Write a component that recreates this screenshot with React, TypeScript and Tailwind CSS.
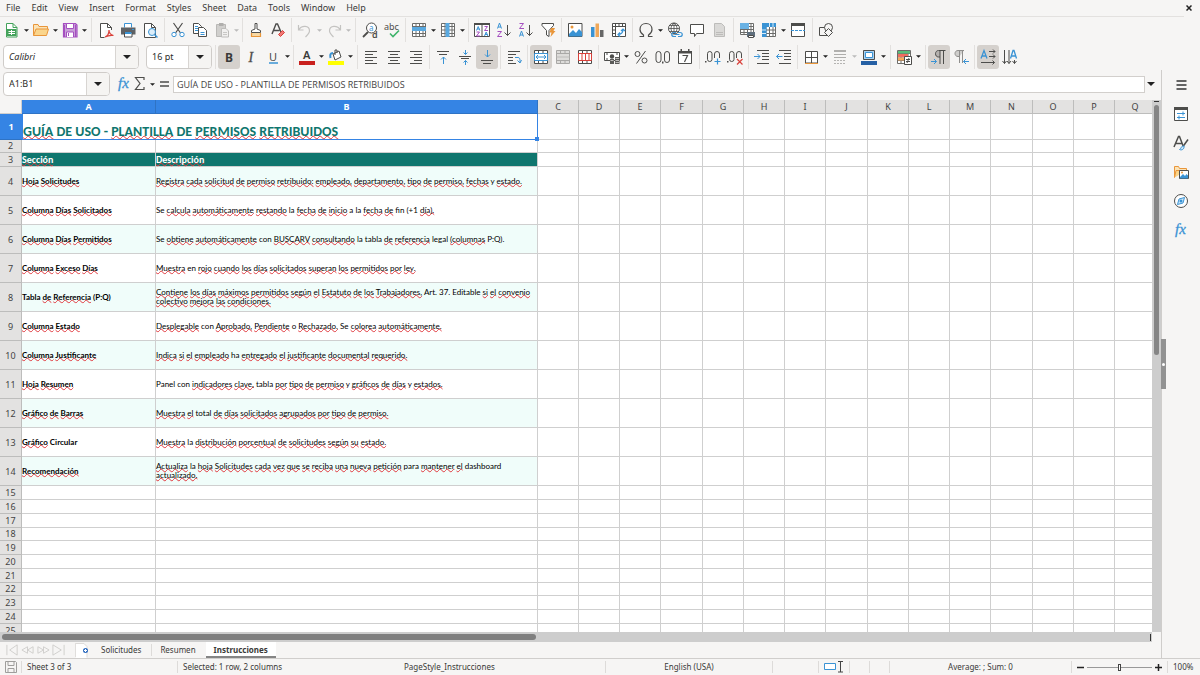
import React, { useState } from "react";

const D = "#4d4d4b";
const B = "#3a93d4";
const O = "#e9963a";
const R = "#d9403a";
const G = "#43a25a";
const P = "#a54fc0";

type Shape = React.ReactNode;

const s = (d: string, stroke = D, fill = "none", w = 1) => (
  <path d={d} stroke={stroke} fill={fill} strokeWidth={w} />
);
const f = (d: string, fill: string) => <path d={d} fill={fill} />;

const docShape = "M2.5 1.5h7l4 4v10h-11z";
const grid = "M1.5 1.5h13v13h-13zM1.5 4.5h13M1.5 8h13M1.5 11.5h13M5 1.5v13M8.5 1.5v13M12 1.5v13";

const icons: Record<string, Shape> = {
  new: <>{s("M2.5 1.5h6.500l4 4v9.500h-10.500z", G, "#fff")}{s("M9 1.500v4h4", G)}{f("M3 7h9.500v7h-9.500z", G)}{s("M4.500 9.500h6.500M4.500 11.500h6.500M7.500 8v5", "#fff")}</>,
  open: <>{s("M.5 13.500v-11h4.500l1 2h8.500v3", O, "#fbe3b6")}{s("M.5 13.500l2.500-6.500h12.500l-2 6.500z", O, "#fad58c")}</>,
  save: <>{s("M1.500 1.500h12l1.500 1.500v12h-13.500z", P, "#c9a0d8", 1.200)}{s("M4.500 1.500h7v5h-7zM4.500 15v-5h7v5", P, "#fff")}{s("M6.500 11v3M13.500 3v12M2.500 3v12", P)}</>,
  pdf: <>{s(docShape, D, "#fff")}{s("M9.500 1.500v4h4", D)}{f("M6.500 8h9v8h-9z", "#f6f5f4")}{s("M7 15c3-1 4-4 4-7 0 4 2 5 4.500 5.500-3-.5-5.500 0-8.500 1.500", R, "none", 1.200)}</>,
  print: <>{s("M4.500 5.500v-4h7v4", B, "#fff")}{f("M1 5.500h14.500v7h-14.500z", "#5f6265")}{s("M4.500 10.500h7.500v4.500h-7.500z", D, "#fff")}{f("M5 10h6.500v2h-6.500zM12 7h2v1h-2z", B)}</>,
  preview: <>{s(docShape, D, "#fff")}{s("M9.500 1.500v4h4")}<circle cx="10" cy="10" r="3.500" stroke={B} fill="#dceefa" />{s("M12.500 12.500l3 3", B, "none", 1.500)}</>,
  cut: <>{s("M3.500 1l7 10M12.500 1l-7 10", D, "none", 1.200)}<circle cx="4" cy="12.500" r="2.200" stroke={B} fill="#fff" /><circle cx="12" cy="12.500" r="2.200" stroke={B} fill="#fff" /></>,
  copy: <>{s("M1.500 1.500h5l3 3v7h-8z", D, "#fff")}{s("M3 4.500h3M3 6.500h3M3 8.500h3", B)}{s("M6.500 5.500h5l3 3v6h-8z", D, "#fff")}{s("M8.500 10.500h4M8.500 12.500h4", B)}</>,
  paste: <>{s("M2.500 2.500h9v12h-9z", "#b9b8b6", "#d0cfcd")}{f("M5 1h4.500v3h-4.500z", "#b0afad")}{s("M7.500 6.500h4.500l2.500 2.500v6h-7z", "#bdbcba", "#f1f0ef")}{s("M9 10.500h4M9 12.500h4", "#c8c7c5")}</>,
  clone: <>{s("M7 7v-5.500h2v5.500l3.500 1.500v2h-9v-2z", D, "#fff")}{s("M3.500 11v3.500h9v-3.500", O, "#f9d9a4", 1.200)}</>,
  clear: <>{s("M2 12l4-10h1.500l3.500 8M3.500 8.500h6", D, "none", 1.400)}{s("M8.500 12.500l4-4 2 2-4 4z", R, "#f07a78")}</>,
  undo: <>{s("M1.500 3v5h5M1.500 8c3-5 11-5 11 1 0 2-2 4-4 6", "#c4c3c1", "none", 1.200)}</>,
  redo: <>{s("M14.500 3v5h-5M14.500 8c-3-5-11-5-11 1 0 2 2 4 4 6", "#c4c3c1", "none", 1.200)}</>,
  find: <><circle cx="9.500" cy="6" r="5" stroke={D} fill="#fff" />{s("M6 10l-5 5", D, "none", 1.800)}<text x="7" y="9" fontSize="8" fill={B} fontFamily="Noto Sans">a</text><text x="10" y="16" fontSize="9" fontWeight="600" fill={D} fontFamily="Noto Sans">d</text></>,
  spell: <><text x="0" y="8" fontSize="9" fill={D} fontFamily="Noto Sans">abc</text>{s("M6 11.500l3 3 6-6", "#3eb36a", "none", 1.600)}</>,
  row: <>{s(grid, "#6c6c6a", "#fff")}{f("M1 5h14v4h-14z", "#5aa9e0")}</>,
  col: <>{s(grid, "#6c6c6a", "#fff")}{f("M5.500 1h4v14h-4z", "#5aa9e0")}</>,
  sort: <>{s("M.5 1.500h15v13h-15zM8 1.500v13", D, "#fff")}{f("M0 1h16v2h-16z", D)}{s("M2.500 8.500l1.700-4 1.700 4M3 7h2.500M10.500 14l1.700-4 1.700 4M11 12.500h2.500", B)}{s("M2.500 10h3l-3 4h3.500M10.500 4.500h3l-3 4h3.500", P)}</>,
  asc: <>{s("M1.500 6.500l2-5.500 2 5.500M2 5h3", B)}{s("M1.500 9.500h4l-4 5h4.500", P)}{s("M11.500 3v10.500M8.500 10.500l3 3 3-3", D)}</>,
  desc: <>{s("M1.500 1.500h4l-4 5h4.500", P)}{s("M1.500 14.500l2-5.500 2 5.500M2 13h3", B)}{s("M11.500 3v10.500M8.500 10.500l3 3 3-3", D)}</>,
  filter: <>{s("M2 1.500h11.500v2l-4.500 5v6l-2.500-1.500v-4.500l-4.500-5z", D, "#fff")}{f("M11 6h4l-1.500 3h2l-5 6 1-4.500h-2z", O)}</>,
  image: <>{s("M1.500 1.500h13.500v13h-13.500z", D, "#fff")}{f("M2 12l4-4 3 3 3-4 3 3v4.500h-13z", B)}<circle cx="5" cy="5" r="1.500" fill={O} /></>,
  chart: <>{f("M2 5h3.500v10h-3.500z", B)}{f("M6.500 1.500h3.500v13.500h-3.500z", "#f0a85a")}{f("M11 8h3.500v7h-3.500z", "#666")}</>,
  pivot: <>{s("M1.500 1.500h13v13h-13zM1.500 4.500h13M4.500 1.500v13M8 1.500v3M11.500 1.500v3M1.500 8h3M1.500 11.500h3", D, "#fff")}{s("M7 12.500c4 0 5-2 5-5.500M9 10.500l-2 2 2 2M10 9l2-2 2 2", B, "none", 1.200)}</>,
  omega: <>{s("M1.500 14.500h4v-1.500c-3-2-3.500-4-3.500-5.500 0-3.500 2.500-6 6-6s6 2.500 6 6c0 1.500-.5 3.500-3.500 5.500v1.500h4", D, "none", 1.200)}</>,
  link: <><circle cx="7" cy="6.500" r="5.500" stroke={D} fill="#fff" />{s("M1.500 6.500h11M7 1v11M2.500 3.500h9M2.500 9.500h9M7 1c-4 3-4 8 0 11M7 1c4 3 4 8 0 11", D, "none", 0.800)}{s("M9 10.500h-2c-3 0-3 4 0 4h2M11 10.500h2c3 0 3 4 0 4h-2M7.500 12.500h5", B, "none", 1.200)}</>,
  comment: <>{s("M1.500 2.500h13v9h-7l-2 3v-3h-4z", D, "#fff")}</>,
  header: <>{s("M3.500 1.500h7l3 3v10h-10z", "#bdbcba", "#dad9d7")}{s("M5 10.500h7M5 12.500h7", "#bdbcba")}</>,
  parea: <>{s("M1.500 1.500h13v11h-13zM1.500 4.500h13M1.500 7.500h13M1.500 10.500h13M5 1.500v11M8.500 1.500v11M12 1.500v11", "#6c6c6a", "#fff")}{f("M1 1h9v6h-9z", "#6ab2e4")}{f("M8 10h8v5h-8z", "#5f6f7d")}{s("M9.500 13.500h5v2h-5z", D, "#fff")}</>,
  freeze: <>{s(grid, "#6c6c6a", "#fff")}{f("M1 1h4.500v14h-4.500zM1 1h14v4h-14z", "#3a93d4")}{s("M1 8h4M1 11.500h4M8.500 1v4M12 1v4", "#d6ecfa")}</>,
  split: <>{s("M1.500 1.500h13v13h-13z", D, "#fff")}{f("M1 1h14v3h-14z", D)}<path d="M1 8.500h14" stroke={B} strokeDasharray="3 1" /></>,
  shapes: <>{s("M1.500 5.500h8v8h-8z")}<circle cx="10.500" cy="5.500" r="4" stroke={D} fill="#f6f5f4" />{s("M6.500 10.500l4-4 4 4-4 4z", D, "#f6f5f4")}</>,
  left: s("M1 2.500h12M1 5.500h8M1 8.500h12M1 11.500h8M1 14.500h12"),
  center: s("M2 2.500h12M4 5.500h8M2 8.500h12M4 11.500h8M2 14.500h12"),
  right: s("M2 2.500h12M6 5.500h8M2 8.500h12M6 11.500h8M2 14.500h12"),
  top: <>{s("M2 2.500h12M4 5.500h8")}{s("M8.500 15v-7M6 10.500l2.500-2.500 2.500 2.500", B)}</>,
  middle: <>{s("M2 7.500h12M4 9.500h8")}{s("M8.500 1v4.500M6.500 3.500l2 2 2-2M8.500 16v-4.500M6.500 13.500l2-2 2 2", B)}</>,
  bottom: <>{s("M2 11.500h12M4 14.500h8")}{s("M8.500 1v7M6 5.500l2.500 2.500 2.500-2.500", B)}</>,
  wrap: <>{s("M2 2.500h12M2 5.500h8M2 8.500h5M2 11.500h5M2 14.500h8")}{s("M9 8.500h3c1.500 0 2 1 2 3v2M11.500 11.500l2.500 2.500 1.500-3", B)}</>,
  merge: <>{s("M1.500 1.500h13v13h-13zM1.500 4.500h13M1.500 11.500h13M5.500 1.500v3M10 1.500v3M5.500 11.500v3M10 11.500v3", D, "#fff")}{s("M1.500 4.500h13v7h-13zM3 8h10M5 6l-2 2 2 2M11 6l2 2-2 2", B)}</>,
  mergeCells: <>{s("M1.500 1.500h13v13h-13zM1.500 4.500h13M1.500 11.500h13M5.500 1.500v3M10 1.500v3M5.500 11.500v3M10 11.500v3", "#a9a8a6", "#dddcda")}{s("M1.500 8h13", "#bdbcba")}</>,
  unmerge: <>{s("M1.500 1.500h13v13h-13zM1.500 4.500h13M1.500 11.500h13M5.500 1.500v3M10 1.500v3M5.500 11.500v3M10 11.500v3", D, "#fff")}{s("M1.500 4.500h13v7h-13zM5 4.500v7M8.500 4.500v7M12 4.500v7", R)}</>,
  currency: <>{s("M.5 3.500h15v8h-15z", D, "#fff")}<circle cx="8" cy="7.500" r="2.200" fill={D} />{s("M2 5h2M12 5h2M2 10h2", D)}{f("M6 10h4v5h-4zM11 8h4.500v7h-4.500z", "#5a5a58")}{s("M6.500 11.500h3M11.500 9.500h3.500M11.500 11.500h3.500M11.500 13.500h3.500", "#e8e7e5", "none", 0.700)}</>,
  percent: <><circle cx="4.500" cy="5" r="2.500" stroke={D} /><circle cx="11.500" cy="11.500" r="2.500" stroke={D} />{s("M12.500 2l-9 12.500")}</>,
  number: <><rect x="1" y="2.500" width="5" height="11" rx="2.500" stroke={D} /><rect x="9.500" y="2.500" width="5" height="11" rx="2.500" stroke={D} />{f("M7 12.500h1.500v2h-1.500z", D)}</>,
  date: <>{s("M1.500 2.500h13v12h-13z", D, "#fff")}{f("M1 2h14v2.500h-14zM3.500 0h1.500v3h-1.500zM11 0h1.500v3h-1.500z", D)}{s("M5.500 6.500h5l-3 6.500", D, "none", 1.200)}</>,
  addDec: <><rect x="2.500" y="2.500" width="4.500" height="10" rx="2.200" stroke={D} /><rect x="9.500" y="2.500" width="5" height="10" rx="2.500" stroke={D} />{f("M0 12h1.500v1.500h-1.500z", D)}{f("M9 9h7v7h-7z", "#f6f5f4")}{s("M12.500 9.500v6M9.500 12.500h6", B, "none", 1.200)}</>,
  delDec: <><rect x="2.500" y="2.500" width="4.500" height="10" rx="2.200" stroke={D} /><rect x="9.500" y="2.500" width="5" height="10" rx="2.500" stroke={D} />{f("M0 12h1.500v1.500h-1.500z", D)}{f("M9 9h7v7h-7z", "#f6f5f4")}{s("M10 10l5.500 5.500M15.500 10l-5.500 5.500", R, "none", 1.200)}</>,
  indent: <>{s("M3 1.500h12M8 4.500h7M8 7.500h7M8 10.500h7M3 14.500h12")}{s("M0 7.500h6M3.500 5l2.500 2.500-2.500 2.500", B)}</>,
  outdent: <>{s("M3 1.500h12M8 4.500h7M8 7.500h7M8 10.500h7M3 14.500h12")}{s("M6.500 7.500h-6M3 5l-2.500 2.500 2.500 2.500", B)}</>,
  border: <>{s("M2.500 2.500h12v11.500h-12z", D, "#fff")}{s("M8.500 2.500v11.500M2.500 8.500h12")}{s("M2 14.500h13", O)}</>,
  bstyle: <>{s("M2 2h12", "#9a9997", "none", 1.500)}{s("M2 5.500h12M2 8.500h12", "#aeadab", "none", 1)}<path d="M2 11.500h12M2 14.500h12" stroke="#b5b4b2" strokeDasharray="2 1" /></>,
  bcolor: <>{s("M2.500 1.500h11v9h-11z", D, "#a9d2f3", 1)}{s("M4.500 3.500h7v5h-7z", B, "#fff")}{f("M0 12h16v4h-16z", "#2660a4")}</>,
  cond: <>{s(grid, "#6c6c6a", "#fff")}{f("M2 2h12v2.500h-12z", "#5bbf7a")}{f("M2 5h10v3h-10z", "#ef6d60")}{f("M2 8.500h6v3h-6z", "#f5a95c")}{s("M8.500 7.500h7v8h-7z", D, "#fff")}{s("M10 10.500h4M10 12.500h4M13 9l-2 5")}</>,
  ltr: <>{f("M9 2h-2c-3.500 0-3.500 6 0 6h2z", "#b5b2af")}{s("M9 15v-13.500M12.500 15v-13.500M14.500 1.500h-7c-4 0-4 6.500 0 6.500h1.500", D, "none", 1)}{s("M0 12.500h5.500M3 10l2.500 2.500-2.500 2.500", B)}</>,
  rtl: <>{s("M6.500 14v-12.500M9.500 14v-12.500M11 1.500h-6c-4 0-4 6 0 6h1.500", "#8f8e8c", "#cfcecc")}{s("M16 12.500h-5.500M13 10l-2.500 2.500 2.500 2.500", B)}</>,
  textLtr: <>{s("M1 9.500l3-8 3 8M2 7h4", B, "none", 1.300)}{s("M9 2.500h6M9 7.500h6M1 13.500h13.500M13 .5l2 2-2 2M13 5.500l2 2-2 2M12.500 11.500l2 2-2 2", D)}</>,
  textTtb: <>{s("M8.500 9.500l2.500-8h1l2.500 8M9.500 7h4", B, "none", 1.300)}{s("M2.500 1v13.500M7 1v13.500M12.500 11v3.500M.5 12l2 2.500 2-2.500M5 12l2 2.500 2-2.500M10.500 12l2 2.500 2-2.500", D)}</>,
  bold: <text x="4" y="12.500" fontSize="12" fontWeight="700" fill="#3a3a38" fontFamily="Noto Sans">B</text>,
  italic: <text x="5.500" y="13" fontSize="14" fontStyle="italic" fill={D} stroke={D} strokeWidth="0.300" fontFamily="Liberation Serif">I</text>,
  underline: <><text x="4" y="11.500" fontSize="11" fill={D} fontFamily="Noto Sans">U</text>{s("M4 14h9", B, "none", 1.500)}</>,
  fontColor: <><text x="4" y="10" fontSize="11" fontWeight="600" fill="#3a3a38" fontFamily="Noto Sans">A</text>{f("M0 12h16v4h-16z", "#c9211e")}</>,
  highlight: <>{s("M5 5l6-3 2 6-6 3z", D, "#fff")}{s("M7 6v-5h2v3", D)}{s("M5 4c-3 0-3 2-2.500 5", B, "none", 2)}{f("M0 12h16v4h-16z", "#ffff00")}</>,
  fx: <text x="2" y="12" fontSize="15" fontStyle="italic" fill={B} stroke={B} strokeWidth="0.300" fontFamily="Liberation Serif">fx</text>,
  sigma: s("M12 4v-2.500h-8.500l4.500 6-4.500 6h8.500v-2.500", D, "none", 1.200),
  equal: <path d="M4 6h9M4 10h9" stroke={D} strokeWidth="1.500" />,
  menu: <path d="M3.500 4h10M3.500 8h10M3.500 12h10" stroke="#333" strokeWidth="1.500" />,
  props: <>{s("M1.500 2.500h13v12h-13z", D, "#fff")}{f("M1 1h14v3h-14z", D)}{s("M4 7.500h8M10 5.500v4M4 11.500h8M6 9.500v4", B)}</>,
  styles: <>{s("M1 12l4.500-10.500h1l4 10.500M3 8.500h6.500", D, "none", 1.500)}{s("M15 4.500l-5 7", D, "none", 1.500)}{s("M6.500 14.500c2 1 5 0 4.500-3.500-3-.5-2.500 2.500-4.500 3.500z", B, "#cde6f8")}</>,
  gallery: <>{s("M1.500 13.500v-11h4l1 2h7v2", O, "#fbe3b6")}{s("M1.500 13.500l1.500-7h10", O, "#fad58c")}{s("M6.500 6.500h9v8h-9z", D, "#fff")}{f("M7 13l3-3 2 2 1.500-2 1.500 1.500v3h-8z", B)}<circle cx="9" cy="8.500" r="1" fill={O} /></>,
  navigator: <><circle cx="8" cy="8" r="6.500" stroke={D} fill="#fff" />{s("M11.500 4.500l-1.500 5.500-5.500 1.500 1.500-5.500z", B, "#cde6f8")}<circle cx="8" cy="8" r="1.500" fill={B} /></>,
  disk: <>{s("M2.500 2.500h10l1 1v10h-11z", "#9f9e9c")}{s("M5 2.500v4h6v-4M5 13.500v-4h6v4", "#9f9e9c")}</>,
  addSheet: <>{f("M0 2h8l3 3v11h-11z", "#fff")}{s("M0 1.500h8l3 3v11", "#dddbd9")}<circle cx="9.500" cy="8.500" r="2.500" fill="#2e6cc0" />{s("M9.500 7v3M8 8.500h3", "#fff")}</>,
};

function Icon({ name }: { name: string }) {
  return (
    <svg viewBox="0 0 16 16" fill="none" aria-hidden="true" className="block h-4 w-4 shrink-0 overflow-visible">
      {icons[name]}
    </svg>
  );
}

function Caret({ big = false, dim = false }: { big?: boolean; dim?: boolean }) {
  return (
    <svg viewBox="0 0 8 4" aria-hidden="true" className={big ? "block h-1 w-2" : "block h-[3px] w-[5px]"}>
      <path d="M0 0h8l-4 4z" fill={dim ? "#bbb" : "#222"} />
    </svg>
  );
}

function Tool({ name, label, on = false }: { name: string; label: string; on?: boolean }) {
  return (
    <button
      type="button"
      aria-label={label}
      aria-pressed={on || undefined}
      className={"flex h-6 w-[22px] shrink-0 items-center justify-center rounded-[3px] " + (on ? "bg-[#d5d1cd]" : "hover:bg-[#e6e4e2]")}
    >
      <Icon name={name} />
    </button>
  );
}

function Split({ name, label, dim = false }: { name: string; label: string; dim?: boolean }) {
  return (
    <div className="flex shrink-0">
      <Tool name={name} label={label} />
      <button type="button" aria-label={label + " options"} className="flex h-6 w-[7px] items-center justify-center">
        <Caret dim={dim} />
      </button>
    </div>
  );
}

function Sep({ size = "s" }: { size?: "s" | "m" | "l" }) {
  const w = size === "s" ? "w-[5px]" : size === "m" ? "w-[6px]" : "w-[7px]";
  return (
    <div className={"flex h-6 shrink-0 justify-center " + w}>
      <div className="w-px bg-[#e2e0de]" />
    </div>
  );
}

function Combo({ label, value, width, italic = false }: { label: string; value: string; width: string; italic?: boolean }) {
  const [v, setV] = useState(value);
  return (
    <div className={"flex h-6 shrink-0 overflow-hidden rounded-[4px] border border-[#cfccc9] bg-white " + width}>
      <input
        aria-label={label}
        value={v}
        onChange={(e) => setV(e.target.value)}
        className={"min-w-0 flex-1 px-[5px] text-[9px] text-[#2c2c2a] outline-none " + (italic ? "italic" : "")}
      />
      <button type="button" aria-label={label + " list"} className="flex w-[23px] items-center justify-center border-l border-[#d8d5d2] bg-[#f5f4f2]">
        <Caret big />
      </button>
    </div>
  );
}

const menus = ["File", "Edit", "View", "Insert", "Format", "Styles", "Sheet", "Data", "Tools", "Window", "Help"];

const known = new Set([
  "DE", "USO", "-", "Se", "la", "con", "en", "Tabla", "tabla", "(P:Q)", "P:Q).", "Art.", "37.", "Editable",
  "Panel", "o", "y", "ha", "total", "legal", "a", "dashboard", "para", "(+1", "fin", "Circular",
]);

function Spelled({ text }: { text: string }) {
  return (
    <>
      {text.split(" ").map((word, i) => (
        <React.Fragment key={i}>
          {i > 0 && " "}
          {known.has(word) ? (
            word
          ) : (
            <span className="underline decoration-[#e0393e] decoration-wavy decoration-1 [text-decoration-skip-ink:none] [text-underline-offset:-1px]">{word}</span>
          )}
        </React.Fragment>
      ))}
    </>
  );
}

const guide: [string, string][] = [
  ["Hoja Solicitudes", "Registra cada solicitud de permiso retribuido: empleado, departamento, tipo de permiso, fechas y estado."],
  ["Columna Días Solicitados", "Se calcula automáticamente restando la fecha de inicio a la fecha de fin (+1 día)."],
  ["Columna Días Permitidos", "Se obtiene automáticamente con BUSCARV consultando la tabla de referencia legal (columnas P:Q)."],
  ["Columna Exceso Días", "Muestra en rojo cuando los días solicitados superan los permitidos por ley."],
  ["Tabla de Referencia (P:Q)", "Contiene los días máximos permitidos según el Estatuto de los Trabajadores, Art. 37. Editable si el convenio colectivo mejora las condiciones."],
  ["Columna Estado", "Desplegable con Aprobado, Pendiente o Rechazado. Se colorea automáticamente."],
  ["Columna Justificante", "Indica si el empleado ha entregado el justificante documental requerido."],
  ["Hoja Resumen", "Panel con indicadores clave, tabla por tipo de permiso y gráficos de días y estados."],
  ["Gráfico de Barras", "Muestra el total de días solicitados agrupados por tipo de permiso."],
  ["Gráfico Circular", "Muestra la distribución porcentual de solicitudes según su estado."],
  ["Recomendación", "Actualiza la hoja Solicitudes cada vez que se reciba una nueva petición para mantener el dashboard actualizado."],
];

const cols = ["C", "D", "E", "F", "G", "H", "I", "J", "K", "L", "M", "N", "O", "P", "Q"];
const emptyRows = [15, 16, 17, 18, 19, 20, 21, 22, 23, 24, 25];

const cell = "border-r border-b border-[#cfcfcf] p-0";
const head = "border-r border-b border-[#bdbdbc] bg-[#e3e2e1] p-0 text-center text-[9px] font-normal leading-[12px] text-[#444]";

function Blank() {
  return <>{cols.map((c) => <td key={c} className={cell} />)}</>;
}

function Sheet() {
  return (
    <table className="w-[1156px] table-fixed border-separate border-spacing-0 bg-white">
      <colgroup>
        <col className="w-[22px]" />
        <col className="w-[134px]" />
        <col className="w-[382px]" />
        {cols.map((c, i) => <col key={c} className={i % 4 === 3 ? "w-[42px]" : "w-[41px]"} />)}
      </colgroup>
      <thead>
        <tr className="h-[14px]">
          <td className="border-r border-b border-[#d0cfce] bg-[#f6f5f4] p-0" />
          <th scope="col" className="border-r border-b border-[#2f73c4] bg-[#3584e4] p-0 text-[9px] leading-[12px] text-white">A</th>
          <th scope="col" className="border-r border-b border-[#2f73c4] bg-[#3584e4] p-0 text-[9px] leading-[12px] text-white">B</th>
          {cols.map((c) => <th key={c} scope="col" className={head}>{c}</th>)}
        </tr>
      </thead>
      <tbody>
        <tr className="h-[26px]">
          <th scope="row" className="border-b border-[#2f73c4] bg-[#3584e4] p-0 text-[9px] text-white">1</th>
          <td colSpan={2} className="relative border border-t-0 border-[#3584e4] bg-white p-0 align-bottom font-[Carlito,Lato,sans-serif] text-[14px] leading-[14px] font-bold text-[#0f766e]">
            <Spelled text="GUÍA DE USO - PLANTILLA DE PERMISOS RETRIBUIDOS" />
            <span className="absolute -right-[2px] -bottom-[2px] h-[4px] w-[4px] bg-[#3584e4]" />
          </td>
          <Blank />
        </tr>
        <tr className="h-[13px]">
          <th scope="row" className={head}>2</th>
          <td className={cell} />
          <td className={cell} />
          <Blank />
        </tr>
        <tr className="h-[14px]">
          <th scope="row" className={head}>3</th>
          <td className={cell + " bg-[#0f766e] font-[Carlito,Lato,sans-serif] text-[10px] leading-[13px] font-bold text-white"}><Spelled text="Sección" /></td>
          <td className={cell + " bg-[#0f766e] font-[Carlito,Lato,sans-serif] text-[10px] leading-[13px] font-bold text-white"}><Spelled text="Descripción" /></td>
          <Blank />
        </tr>
        {guide.map(([name, text], i) => (
          <tr key={name} className="h-[29px]">
            <th scope="row" className={head + " pt-[2px]"}>{i + 4}</th>
            <td className={cell + " font-[Lato,sans-serif] text-[8px] leading-[9px] font-bold text-black " + (i % 2 ? "" : "bg-[#f0fdfa]")}>
              <Spelled text={name} />
            </td>
            <td className={cell + " font-[Lato,sans-serif] text-[8px] leading-[9px] text-black " + (i % 2 ? "" : "bg-[#f0fdfa]")}>
              <Spelled text={text} />
            </td>
            <Blank />
          </tr>
        ))}
        {emptyRows.map((n) => (
          <tr key={n} className={n === 18 || n === 22 ? "h-[13px]" : "h-[14px]"}>
            <th scope="row" className={head}>{n}</th>
            <td className={cell} />
            <td className={cell} />
            <Blank />
          </tr>
        ))}
      </tbody>
    </table>
  );
}

function Bar() {
  return <div className="h-[12px] w-px shrink-0 bg-[#dddbd9]" />;
}

export default function App() {
  const [formula, setFormula] = useState("GUÍA DE USO - PLANTILLA DE PERMISOS RETRIBUIDOS");
  const [zoom, setZoom] = useState(50);
  return (
    <div className="flex h-screen flex-col overflow-hidden bg-[#f6f5f4] font-['Noto_Sans',sans-serif] text-[9px] text-[#3a3a38]">
      <header className="shrink-0">
        <nav aria-label="Main menu" className="mr-4 flex h-[17px] items-center gap-[11px] border-b border-[#e3e1df] pl-[6px]">
          {menus.map((m) => <button key={m} type="button">{m}</button>)}
          <button type="button" aria-label="Close document" className="-mr-2 ml-auto">
            <svg viewBox="0 0 6 6" className="h-[6px] w-[6px]"><path d="M.5.5l5 5M5.500.5l-5 5" stroke="#222" strokeWidth="1.500" /></svg>
          </button>
        </nav>
        <div role="toolbar" aria-label="Standard" className="flex h-[26px] items-center pl-px">
          <Split name="new" label="New" />
          <Split name="open" label="Open" />
          <Split name="save" label="Save" />
          <Sep size="l" />
          <Tool name="pdf" label="Export as PDF" />
          <Tool name="print" label="Print" />
          <Tool name="preview" label="Print preview" />
          <Sep size="m" />
          <Tool name="cut" label="Cut" />
          <Tool name="copy" label="Copy" />
          <Split name="paste" label="Paste" dim />
          <Sep />
          <Tool name="clone" label="Clone formatting" />
          <Tool name="clear" label="Clear formatting" />
          <Sep />
          <Split name="undo" label="Undo" dim />
          <Split name="redo" label="Redo" dim />
          <Sep size="l" />
          <Tool name="find" label="Find and replace" />
          <Tool name="spell" label="Spelling" />
          <Sep />
          <Split name="row" label="Row" />
          <Split name="col" label="Column" />
          <Sep />
          <Tool name="sort" label="Sort" />
          <Tool name="asc" label="Sort ascending" />
          <Tool name="desc" label="Sort descending" />
          <Tool name="filter" label="AutoFilter" />
          <Sep />
          <Tool name="image" label="Insert image" />
          <Tool name="chart" label="Insert chart" />
          <Tool name="pivot" label="Insert pivot table" />
          <Sep />
          <Split name="omega" label="Special character" />
          <Tool name="link" label="Hyperlink" />
          <Tool name="comment" label="Comment" />
          <Tool name="header" label="Headers and footers" />
          <Sep size="m" />
          <Tool name="parea" label="Define print area" />
          <Split name="freeze" label="Freeze rows and columns" />
          <Tool name="split" label="Split window" />
          <Sep size="m" />
          <Tool name="shapes" label="Show draw functions" />
        </div>
        <div role="toolbar" aria-label="Formatting" className="flex h-[27px] items-center pl-[3px]">
          <Combo label="Font name" value="Calibri" width="w-[136px]" italic />
          <div className="w-[7px] shrink-0" />
          <Combo label="Font size" value="16 pt" width="w-[66px]" />
          <Sep size="m" />
          <Tool name="bold" label="Bold" on />
          <Tool name="italic" label="Italic" />
          <Split name="underline" label="Underline" />
          <Sep />
          <Split name="fontColor" label="Font color" />
          <Split name="highlight" label="Highlighting color" />
          <Sep size="l" />
          <Tool name="left" label="Align left" />
          <Tool name="center" label="Center horizontally" />
          <Tool name="right" label="Align right" />
          <Sep />
          <Tool name="top" label="Align top" />
          <Tool name="middle" label="Center vertically" />
          <Tool name="bottom" label="Align bottom" on />
          <Sep />
          <Tool name="wrap" label="Wrap text" />
          <Sep />
          <Tool name="merge" label="Merge and center cells" on />
          <Tool name="mergeCells" label="Merge cells" />
          <Tool name="unmerge" label="Unmerge cells" />
          <Sep />
          <Split name="currency" label="Format as currency" />
          <Tool name="percent" label="Format as percent" />
          <Tool name="number" label="Format as number" />
          <Tool name="date" label="Format as date" />
          <Sep size="m" />
          <Tool name="addDec" label="Add decimal place" />
          <Tool name="delDec" label="Delete decimal place" />
          <Sep />
          <Tool name="indent" label="Increase indent" />
          <Tool name="outdent" label="Decrease indent" />
          <Sep />
          <Split name="border" label="Borders" />
          <Split name="bstyle" label="Border style" dim />
          <Split name="bcolor" label="Border color" />
          <Sep size="m" />
          <Split name="cond" label="Conditional formatting" />
          <Sep size="m" />
          <Tool name="ltr" label="Left-to-right" on />
          <Tool name="rtl" label="Right-to-left" />
          <Sep />
          <Tool name="textLtr" label="Text direction from left to right" on />
          <Tool name="textTtb" label="Text direction from top to bottom" />
        </div>
      </header>

      <div className="flex min-h-0 flex-1">
        <main className="flex min-w-0 flex-1 flex-col">
          <div className="flex h-[30px] shrink-0 items-center pr-1 pb-[2px] pl-[3px]">
            <Combo label="Name box" value="A1:B1" width="w-[107px]" />
            <div className="flex items-center pr-px pl-[6px]">
              <button type="button" aria-label="Function wizard" className="flex h-6 w-4 items-center justify-center"><Icon name="fx" /></button>
              <button type="button" aria-label="Select function" className="flex h-6 w-4 items-center justify-center"><Icon name="sigma" /></button>
              <button type="button" aria-label="Select function options" className="flex h-6 w-2 items-center justify-center"><Caret /></button>
              <button type="button" aria-label="Formula" className="flex h-6 w-4 items-center justify-center"><Icon name="equal" /></button>
            </div>
            <input
              aria-label="Formula input"
              value={formula}
              onChange={(e) => setFormula(e.target.value)}
              className="h-[17px] min-w-0 flex-1 border border-[#d2cfcc] bg-white px-[3px] font-['Open_Sans',sans-serif] text-[9px] text-[#444] outline-none"
            />
            <button type="button" aria-label="Expand formula bar" className="flex h-4 w-3 items-center justify-center"><Caret big /></button>
          </div>
          <div className="flex min-h-0 flex-1">
            <div className="min-w-0 flex-1 overflow-hidden">
              <Sheet />
            </div>
            <div className="flex w-[9px] shrink-0 flex-col items-center bg-[#cdcdcd] pt-px">
              <div className="h-px w-[5px] bg-[#333]" />
              <div className="mt-[3px] h-[47%] w-[5px] rounded-full bg-[#858585]" />
            </div>
          </div>
          <div className="mr-[9px] flex h-[10px] shrink-0 items-center justify-between bg-[#cdcdcd] pr-px pl-[2px]">
            <div className="h-[6px] w-[46.5%] rounded-full bg-[#7f7f7f]" />
            <div className="h-[7px] w-px bg-[#333]" />
          </div>
          <div className="flex h-[16px] shrink-0 items-center">
            <div className="flex w-[76px] shrink-0 items-center justify-between border-r border-[#e0dedc] pr-[9px] pl-[5px]">
              {["M2 2v11M13 2l-8 5.500 8 5.500z", "M8 4l-6 3.500 6 3.500zM14 4l-6 3.500 6 3.500z", "M2 4l6 3.500-6 3.500zM8 4l6 3.500-6 3.500z", "M14 2v11M2 2l9 5.500-9 5.500z"].map((d, i) => (
                <button key={d} type="button" aria-label={["First sheet", "Previous sheet", "Next sheet", "Last sheet"][i]}>
                  <svg viewBox="0 0 16 15" className="block h-[14px] w-[15px]"><path d={d} fill="none" stroke="#cfcdcb" /></svg>
                </button>
              ))}
            </div>
            <button type="button" aria-label="Add sheet" className="flex h-full w-[17px] shrink-0 overflow-hidden"><Icon name="addSheet" /></button>
            <div role="tablist" aria-label="Sheets" className="flex h-full items-center text-[8px]">
              <button role="tab" aria-selected="false" type="button" className="pr-[10px] pl-2">Solicitudes</button>
              <Bar />
              <button role="tab" aria-selected="false" type="button" className="pr-[10px] pl-2">Resumen</button>
              <button role="tab" aria-selected="true" type="button" className="h-full border-b-2 border-[#858585] bg-white px-2 leading-[13px] font-bold">Instrucciones</button>
            </div>
          </div>
        </main>
        <aside className="relative flex w-[39px] shrink-0 flex-col items-center border-l border-[#cfcdcb]">
          <div className="flex w-full flex-col items-center gap-[5px] pt-[3px]">
            {[["menu", "Sidebar settings"], ["props", "Properties"], ["styles", "Styles"], ["gallery", "Gallery"], ["navigator", "Navigator"], ["fx", "Functions"]].map(([n, l]) => (
              <Tool key={n} name={n} label={l} />
            ))}
          </div>
          <button type="button" aria-label="Hide sidebar" className="absolute top-1/2 -left-px flex h-[50px] w-[5px] -translate-y-1/2 items-center justify-center bg-[#929292]">
            <span className="h-[3px] w-[3px] rounded-full bg-white" />
          </button>
        </aside>
      </div>

      <footer className="flex h-[17px] shrink-0 items-center border-t border-[#d0cecc] text-[8px]">
        <div className="flex w-[21px] shrink-0 justify-center"><Icon name="disk" /></div>
        <Bar />
        <div className="w-[155px] shrink-0 pl-[5px]">Sheet 3 of 3</div>
        <Bar />
        <div className="w-[220px] shrink-0 pl-[5px]">Selected: 1 row, 2 columns</div>
        <div className="w-[207px] shrink-0 pl-[6px]">PageStyle_Instrucciones</div>
        <Bar />
        <div className="min-w-0 flex-1 text-center">English (USA)</div>
        <Bar />
        <div className="w-[45px] shrink-0" />
        <Bar />
        <div className="flex w-[30px] shrink-0 items-center justify-center">
          <svg viewBox="0 0 20 12" className="h-[12px] w-5"><path d="M.5 2.500h11v6h-11z" fill="#fff" stroke={B} /><path d="M14 .5h5M16.500.5v10.500M14 11h5" fill="none" stroke="#444" /></svg>
        </div>
        <Bar />
        <div className="w-[19px] shrink-0" />
        <Bar />
        <div className="w-[19px] shrink-0" />
        <Bar />
        <div className="w-[181px] shrink-0 text-center">Average: ; Sum: 0</div>
        <Bar />
        <div className="flex w-[95px] shrink-0 items-center justify-center gap-[3px]">
          <button type="button" aria-label="Zoom out"><svg viewBox="0 0 7 7" className="block h-[7px] w-[7px]"><path d="M0 3.500h7" stroke="#222" strokeWidth="1.500" /></svg></button>
          <input
            type="range"
            aria-label="Zoom"
            value={zoom}
            onChange={(e) => setZoom(Number(e.target.value))}
            className="h-[8px] w-[65px] appearance-none bg-[linear-gradient(#999,#999)] bg-[length:100%_1px] bg-center bg-no-repeat [&::-webkit-slider-thumb]:h-[7px] [&::-webkit-slider-thumb]:w-[3px] [&::-webkit-slider-thumb]:appearance-none [&::-webkit-slider-thumb]:border [&::-webkit-slider-thumb]:border-[#444] [&::-webkit-slider-thumb]:bg-white"
          />
          <button type="button" aria-label="Zoom in"><svg viewBox="0 0 7 7" className="block h-[7px] w-[7px]"><path d="M0 3.500h7M3.500 0v7" stroke="#222" strokeWidth="1.500" /></svg></button>
        </div>
        <Bar />
        <div className="w-[32px] shrink-0 pl-[5px]">100%</div>
      </footer>
    </div>
  );
}
